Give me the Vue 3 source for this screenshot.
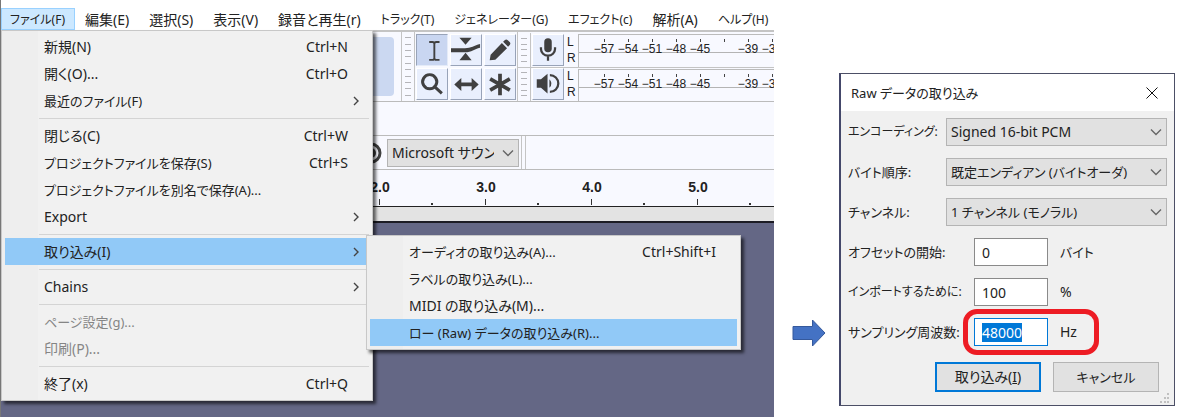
<template>
  <main class="page">
    <!-- Audio editor window -->
    <section class="editor">
      <nav class="menubar">
        <button
          v-for="name in menus"
          :key="name"
          type="button"
          class="menubar-item"
          :class="{ 'is-open': name === openMenu, 'is-kana': hasKatakana(name) }"
        >
          {{ name }}
        </button>
      </nav>

      <div class="toolbars">
        <div class="transport">
          <button type="button" class="record" aria-label="Record">
            <span class="record-dot"></span>
          </button>
        </div>
        <div class="grip"><i v-for="n in 10" :key="n"></i></div>
        <div class="tools">
          <button
            v-for="tool in tools"
            :key="tool.name"
            type="button"
            class="tool"
            :class="{ 'is-active': tool.name === 'Selection' }"
            :aria-label="tool.name"
          >
            <svg viewBox="0 0 32 32">
              <path v-if="tool.fill" :d="tool.fill" fill="#404040" />
              <path
                v-if="tool.line"
                :d="tool.line"
                fill="none"
                stroke="#404040"
                :stroke-width="tool.width"
              />
            </svg>
          </button>
        </div>
        <div class="meters">
          <div v-for="meter in meters" :key="meter.name" class="meter">
            <div class="grip"><i v-for="n in 5" :key="n"></i></div>
            <button type="button" class="tool" :aria-label="meter.name">
              <svg viewBox="0 0 32 32">
                <path :d="meter.fill" fill="#404040" />
                <path :d="meter.line" fill="none" stroke="#404040" stroke-width="2.4" />
              </svg>
            </button>
            <div class="channels"><span>L</span><span>R</span></div>
            <div class="scale">
              <span v-for="(db, i) in levels" :key="i" class="level">{{ db }}</span>
            </div>
          </div>
        </div>
      </div>

      <div class="blank-bar"></div>

      <div class="device-bar">
        <svg class="device-icon" viewBox="0 0 24 24">
          <circle cx="12" cy="12" r="9" fill="none" stroke="#404040" stroke-width="3" />
          <circle cx="12" cy="12" r="5" fill="#404040" />
        </svg>
        <div class="select device">
          <select aria-label="Host">
            <option>Microsoft サウン</option>
          </select>
          <svg viewBox="0 0 12 8"><path d="M1 1.5 6 6.5 11 1.5" /></svg>
        </div>
        <div class="bar-end"></div>
      </div>

      <div class="ruler">
        <span v-for="s in seconds" :key="s" class="second">{{ s }}</span>
      </div>
      <div class="scrub"></div>
      <div class="tracks"></div>

      <!-- Open File menu -->
      <ul class="menu file-menu">
        <li
          v-for="(item, i) in fileMenu"
          :key="i"
          :class="item ? 'menu-entry' : 'menu-line'"
        >
          <template v-if="item">
            <button
              type="button"
              class="menu-item"
              :class="{ 'is-selected': item.children }"
              :disabled="item.disabled"
            >
              <span :class="{ 'is-kana': hasKatakana(item.label) }">{{ item.label }}</span>
              <span class="shortcut">{{ item.keys }}</span>
              <svg v-if="item.more" class="more" viewBox="0 0 6 10">
                <path d="M1 1 5 5 1 9" />
              </svg>
            </button>
            <ul v-if="item.children" class="menu sub-menu">
              <li v-for="child in item.children" :key="child.label">
                <button
                  type="button"
                  class="menu-item"
                  :class="{ 'is-selected': child.selected }"
                >
                  <span :class="{ 'is-kana': hasKatakana(child.label) }">{{ child.label }}</span>
                  <span class="shortcut">{{ child.keys }}</span>
                </button>
              </li>
            </ul>
          </template>
        </li>
      </ul>
    </section>

    <svg class="pointer" viewBox="0 0 34 28">
      <path d="M1 7.500H20.500V1L33 14 20.500 27V20.500H1Z" />
    </svg>

    <!-- Import dialog -->
    <form class="dialog" @submit.prevent>
      <header class="dialog-title">
        <span class="is-kana">Raw データの取り込み</span>
        <button type="button" class="close" aria-label="Close">
          <svg viewBox="0 0 12 12"><path d="M.5.5 11.500 11.500M11.500.5.5 11.500" /></svg>
        </button>
      </header>

      <div class="dialog-body">
        <div v-for="field in choices" :key="field.id" class="row">
          <label class="row-label" :class="{ 'is-dense': field.dense }" :for="field.id">
            {{ field.label }}
          </label>
          <div class="select">
            <select :id="field.id" :class="{ 'is-kana': hasKatakana(field.value) }">
              <option>{{ field.value }}</option>
            </select>
            <svg viewBox="0 0 12 8"><path d="M1 1.500 6 6.500 11 1.500" /></svg>
          </div>
        </div>

        <div v-for="field in numbers" :key="field.id" class="row">
          <label class="row-label is-wide" :class="{ 'is-dense': field.dense }" :for="field.id">
            {{ field.label }}
          </label>
          <div class="amount" :class="{ 'is-marked': field.id === 'rate' }">
            <input :id="field.id" v-model="field.value" type="text" />
            <span :class="{ 'is-kana': hasKatakana(field.unit) }">{{ field.unit }}</span>
          </div>
        </div>

        <div class="actions">
          <button type="submit" class="action is-default">取り込み(<u>I</u>)</button>
          <button type="button" class="action is-kana">キャンセル</button>
        </div>
      </div>

      <svg class="resize" viewBox="0 0 10 10">
        <path d="M7 0h2v2H7zM7 4h2v2H7zM7 8h2v2H7zM4 4h2v2H4zM4 8h2v2H4zM0 8h2v2H0z" />
      </svg>
    </form>
  </main>
</template>

<script setup>
import { onMounted, reactive } from "vue";

const openMenu = "ファイル(F)";

const menus = [
  "ファイル(F)",
  "編集(E)",
  "選択(S)",
  "表示(V)",
  "録音と再生(r)",
  "トラック(T)",
  "ジェネレーター(G)",
  "エフェクト(c)",
  "解析(A)",
  "ヘルプ(H)",
];

// null = separator
const fileMenu = [
  { label: "新規(N)", keys: "Ctrl+N" },
  { label: "開く(O)...", keys: "Ctrl+O" },
  { label: "最近のファイル(F)", more: true },
  null,
  { label: "閉じる(C)", keys: "Ctrl+W" },
  { label: "プロジェクトファイルを保存(S)", keys: "Ctrl+S" },
  { label: "プロジェクトファイルを別名で保存(A)..." },
  { label: "Export", more: true },
  null,
  {
    label: "取り込み(I)",
    more: true,
    children: [
      { label: "オーディオの取り込み(A)...", keys: "Ctrl+Shift+I" },
      { label: "ラベルの取り込み(L)..." },
      { label: "MIDI の取り込み(M)..." },
      { label: "ロー (Raw) データの取り込み(R)...", selected: true },
    ],
  },
  null,
  { label: "Chains", more: true },
  null,
  { label: "ページ設定(g)...", disabled: true },
  { label: "印刷(P)...", disabled: true },
  null,
  { label: "終了(x)", keys: "Ctrl+Q" },
];

const tools = [
  {
    name: "Selection",
    line: "M13 7.5h3.500q2 0 2 2v15q0 2-2 2H13M24 7.500h-3.500q-2 0-2 2v15q0 2 2 2H24",
    width: 2,
  },
  {
    name: "Envelope",
    fill: "M9 3h13l-6.500 7.500zM15.500 19l6.500 8H9zM0 14h15c6 0 10-3 16-4.500v4c-6 1-9 5-16 5H0z",
  },
  {
    name: "Draw",
    fill: "M5 27l1-6L18 8.500l5.500 5.500L11 26.500zM19.300 7.200l2-2q1.500-1 3 .3l2 2q1.300 1.500.3 3l-2 2z",
  },
  {
    name: "Zoom",
    line: "M13.500 6a7.500 7.500 0 1 0 .1 0zM19 19l7.500 7",
    width: 3.2,
  },
  {
    name: "Time Shift",
    fill: "M3.500 16.500l7.500-7v5h11v-5l7.500 7-7.500 7v-5H11v5z",
  },
  {
    name: "Multi",
    line: "M16 5v23M5.500 10.500l21 12M5.500 22.500l21-12",
    width: 4,
  },
];

const meters = [
  {
    name: "Recording level",
    fill: "M12 7.500a4 4 0 0 1 8 0v7a4 4 0 0 1-8 0z",
    line: "M8.500 13v2a7.500 7 0 0 0 15 0v-2M16 22v5.500",
  },
  {
    name: "Playback level",
    fill: "M4 11h4.500l7-6v21l-7-6H4zM17.500 11q4.500 4.500 0 9z",
    line: "M18 6.500a9 9 0 0 1 0 18",
  },
];

const levels = ["−57", "−54", "−51", "−48", "−45", "", "−39", "−36"];

const seconds = ["2.0", "3.0", "4.0", "5.0"];

const choices = [
  { id: "encoding", label: "エンコーディング:", value: "Signed 16-bit PCM", dense: true },
  { id: "order", label: "バイト順序:", value: "既定エンディアン (バイトオーダ)" },
  { id: "channels", label: "チャンネル:", value: "1 チャンネル (モノラル)" },
];

const numbers = reactive([
  { id: "offset", label: "オフセットの開始:", value: "0", unit: "バイト" },
  { id: "portion", label: "インポートするために:", value: "100", unit: "%", dense: true },
  { id: "rate", label: "サンプリング周波数:", value: "48000", unit: "Hz" },
]);

const hasKatakana = (text) => /[ァ-ヶー]{2}/.test(text);

onMounted(() => {
  document.getElementById("rate").select();
});
</script>

<style>
body {
  background: #fff;
}
</style>

<style scoped>
.page {
  display: flex;
  align-items: flex-start;
  min-height: 100vh;
  box-sizing: border-box;
  padding-right: 25px;
  font-family: "Noto Sans", "Noto Sans CJK JP", sans-serif;
  font-size: 14px;
  line-height: 20px;
  font-feature-settings: "palt";
  color: #222;
}

button,
input,
select {
  margin: 0;
  font: inherit;
  font-feature-settings: inherit;
  color: inherit;
  box-sizing: border-box;
  border-radius: 0;
}

.is-kana {
  font-size: 13px;
}

/* Editor window */
.editor {
  position: relative;
  display: flex;
  flex-direction: column;
  flex: 1;
  min-width: 0;
  min-height: 100vh;
  box-sizing: border-box;
  overflow: hidden;
  border-left: 1px solid #777;
}

.menubar {
  display: flex;
  padding-top: 8px;
  white-space: nowrap;
}

.menubar-item {
  height: 22px;
  padding: 1px 9px 0 8px;
  border: 1px solid transparent;
  background: none;
}

.menubar-item + .menubar-item {
  padding-left: 9px;
}

.menubar-item.is-kana {
  font-size: 12px;
}

.menubar-item.is-open {
  background: #cce8ff;
  border-color: #99d1ff;
}

.toolbars {
  display: flex;
  height: 72px;
  box-sizing: border-box;
  border-top: 2px solid #c4c4c4;
  border-bottom: 1px solid #bbb;
  background: #f8f9ff;
}

.transport {
  display: flex;
  justify-content: flex-end;
  width: 401px;
  box-sizing: border-box;
  padding: 5px 7px 5px 0;
  border-right: 1px solid #c4c4c4;
}

.record {
  display: flex;
  align-items: center;
  width: 60px;
  padding: 0 0 0 12px;
  border: 0;
  border-radius: 4px;
  background: #cbd8f1;
}

.record-dot {
  width: 27px;
  height: 27px;
  border-radius: 50%;
  background: #d03030;
}

.grip {
  display: flex;
  flex-direction: column;
  justify-content: space-evenly;
  align-items: center;
  width: 12px;
  border-right: 1px solid #c4c4c4;
}

.grip i {
  width: 6px;
  height: 1px;
  background: #b4b4b8;
}

.tools {
  display: grid;
  grid-template-columns: repeat(3, 32px);
  grid-template-rows: repeat(2, 32px);
  gap: 2px;
  padding: 2px 1px 0;
  border-right: 1px solid #c4c4c4;
}

.tool {
  display: block;
  width: 32px;
  height: 32px;
  padding: 0;
  border: 1px solid #fff;
  border-right-color: #98a3b8;
  border-bottom-color: #98a3b8;
  background: #e9effd;
}

.tool svg {
  display: block;
  width: 100%;
}

.tool.is-active {
  background: #c9d6f1;
  border-color: #98a3b8 #e4ebf8 #e4ebf8 #98a3b8;
}

.meters {
  display: flex;
  flex-direction: column;
  flex: 1;
  min-width: 0;
  padding-top: 1px;
}

.meter {
  display: flex;
  align-items: center;
  flex: 1;
  min-height: 0;
  gap: 1px;
}

.meter .grip {
  align-self: stretch;
}

.meter + .meter {
  border-top: 1px solid #c4c4c4;
}

.channels {
  display: flex;
  flex-direction: column;
  width: 10px;
  padding-left: 2px;
  font: 12px/16px "Liberation Sans", sans-serif;
}

.scale {
  display: flex;
  align-self: stretch;
  flex: 1;
  min-width: 0;
  overflow: hidden;
  margin-top: 1px;
  padding-left: 13px;
  border: 1px solid #bbb;
  border-width: 1px 0 0 1px;
  background: linear-gradient(#b4b4b4, #b4b4b4) 0 17px / 100% 1px no-repeat;
}

.level {
  display: flex;
  flex-direction: column;
  align-items: center;
  flex: 0 0 24px;
  font: 12px/14px "Liberation Sans", sans-serif;
}

.level::before {
  content: "";
  width: 1px;
  height: 3px;
  margin-top: 4px;
  background: #444;
}

.blank-bar {
  height: 33px;
  background: #f8f9ff;
}

.device-bar {
  display: flex;
  align-items: center;
  height: 35px;
  box-sizing: border-box;
  padding-left: 358px;
  border-top: 1px solid #bbb;
  border-bottom: 1px solid #bbb;
  background: #f8f9ff;
}

.device-icon {
  width: 24px;
  margin-right: 4px;
}

.bar-end {
  align-self: stretch;
  width: 3px;
  margin-left: 2px;
  border: 1px solid #c4c4c4;
  border-width: 0 1px;
}

.ruler {
  display: flex;
  height: 36px;
  padding-left: 326px;
  border-bottom: 1px solid #222;
  background: #f8f9ff;
}

.second {
  position: relative;
  flex: 0 0 106px;
  padding-top: 7px;
  font: bold 14px/20px "Liberation Sans", sans-serif;
  text-align: center;
}

.second::before,
.second::after {
  content: "";
  position: absolute;
  right: 0;
  bottom: 1px;
  width: 2px;
  height: 2px;
  background: #333;
}

.second::before {
  right: 50%;
  width: 1px;
  height: 6px;
}

.scrub {
  height: 14px;
  border-bottom: 2px solid #1c1c24;
  background: #e3e3e3;
}

.tracks {
  flex: 1;
  background: #646785;
}

/* Menus */
.menu {
  position: absolute;
  margin: 0;
  padding: 2px 3px 3px;
  box-sizing: border-box;
  list-style: none;
  border: 1px solid #c8c8c8;
  background: linear-gradient(to right, #eee 36px, #f1f1f1 36px);
  box-shadow: 3px 3px 3px rgba(0, 0, 0, 0.6);
}

.file-menu {
  left: 0;
  top: 30px;
  width: 372px;
}

.sub-menu {
  left: calc(100% - 3px);
  top: -3px;
  width: 375px;
}

.menu-entry {
  position: relative;
}

.menu-line {
  height: 1px;
  margin: 4px 0 3px 34px;
  background: #d4d4d4;
}

.menu-item {
  display: grid;
  grid-template-columns: 1fr auto 21px;
  align-items: center;
  width: 100%;
  height: 27px;
  padding: 0 0 0 39px;
  border: 0;
  background: none;
  text-align: left;
  white-space: nowrap;
}

.menu-item.is-selected {
  background: #91c9f7;
}

.menu-item:disabled {
  color: #858585;
}

.more {
  width: 6px;
  margin-left: 5px;
  fill: none;
  stroke: #444;
  stroke-width: 1.4;
}

/* Arrow between the windows */
.pointer {
  flex: none;
  width: 34px;
  margin: 319px 13px 0 18px;
  fill: #4472c4;
  stroke: #35599c;
}

/* Dialog */
.dialog {
  position: relative;
  flex: 0 0 336px;
  box-sizing: border-box;
  margin-top: 73px;
  border: 1px solid #4c4f66;
  border-left: 2px solid #44486a;
  background: #f0f0f0;
}

.dialog-title {
  display: flex;
  align-items: center;
  justify-content: space-between;
  height: 37px;
  padding: 0 16px 0 10px;
  background: #fff;
}

.close {
  padding: 0;
  border: 0;
  background: none;
}

.close svg {
  display: block;
  width: 12px;
  stroke: #111;
}

.dialog-body {
  display: flex;
  flex-direction: column;
  gap: 12px;
  padding: 7px 7px 13px;
}

.row {
  display: flex;
  align-items: center;
  height: 28px;
  white-space: nowrap;
}

.row-label {
  flex: 0 0 98px;
  font-size: 13px;
}

.row-label.is-wide {
  flex-basis: 126px;
}

.row-label.is-dense {
  font-size: 12px;
}

.select {
  display: grid;
  flex: 1;
  min-width: 0;
  align-items: center;
}

.select select {
  grid-area: 1 / 1;
  width: 100%;
  height: 28px;
  padding: 0 24px 0 4px;
  appearance: none;
  border: 1px solid #b4b4b4;
  background: #e1e1e1;
}

.select svg {
  grid-area: 1 / 1;
  justify-self: end;
  width: 12px;
  margin-right: 5px;
  pointer-events: none;
  fill: none;
  stroke: #666;
  stroke-width: 1.4;
}

.device {
  flex: 0 0 132px;
}

.amount {
  position: relative;
  display: flex;
  align-items: center;
  gap: 12px;
}

.amount input {
  width: 74px;
  height: 28px;
  padding: 0 7px;
  border: 1px solid #8a8a8a;
  outline: 0;
  background: #fff;
  line-height: 18px;
}

.amount input:focus {
  border-color: #0078d7;
}

.amount input::selection {
  background: #0078d7;
  color: #fff;
}

/* Red ring drawn round the sample rate */
.is-marked::after {
  content: "";
  position: absolute;
  inset: -9px -22px -9px -11px;
  border: 5px solid #ed1c24;
  border-radius: 14px;
  pointer-events: none;
}

.actions {
  display: flex;
  justify-content: flex-end;
  gap: 12px;
  margin-top: 4px;
  padding-right: 8px;
}

.action {
  width: 106px;
  height: 30px;
  padding: 0;
  border: 1px solid #b4b4b4;
  background: #e1e1e1;
}

.action.is-default {
  border: 2px solid #0078d7;
}

.resize {
  position: absolute;
  right: 4px;
  bottom: 2px;
  width: 10px;
  fill: #c0c0c0;
}
</style>
